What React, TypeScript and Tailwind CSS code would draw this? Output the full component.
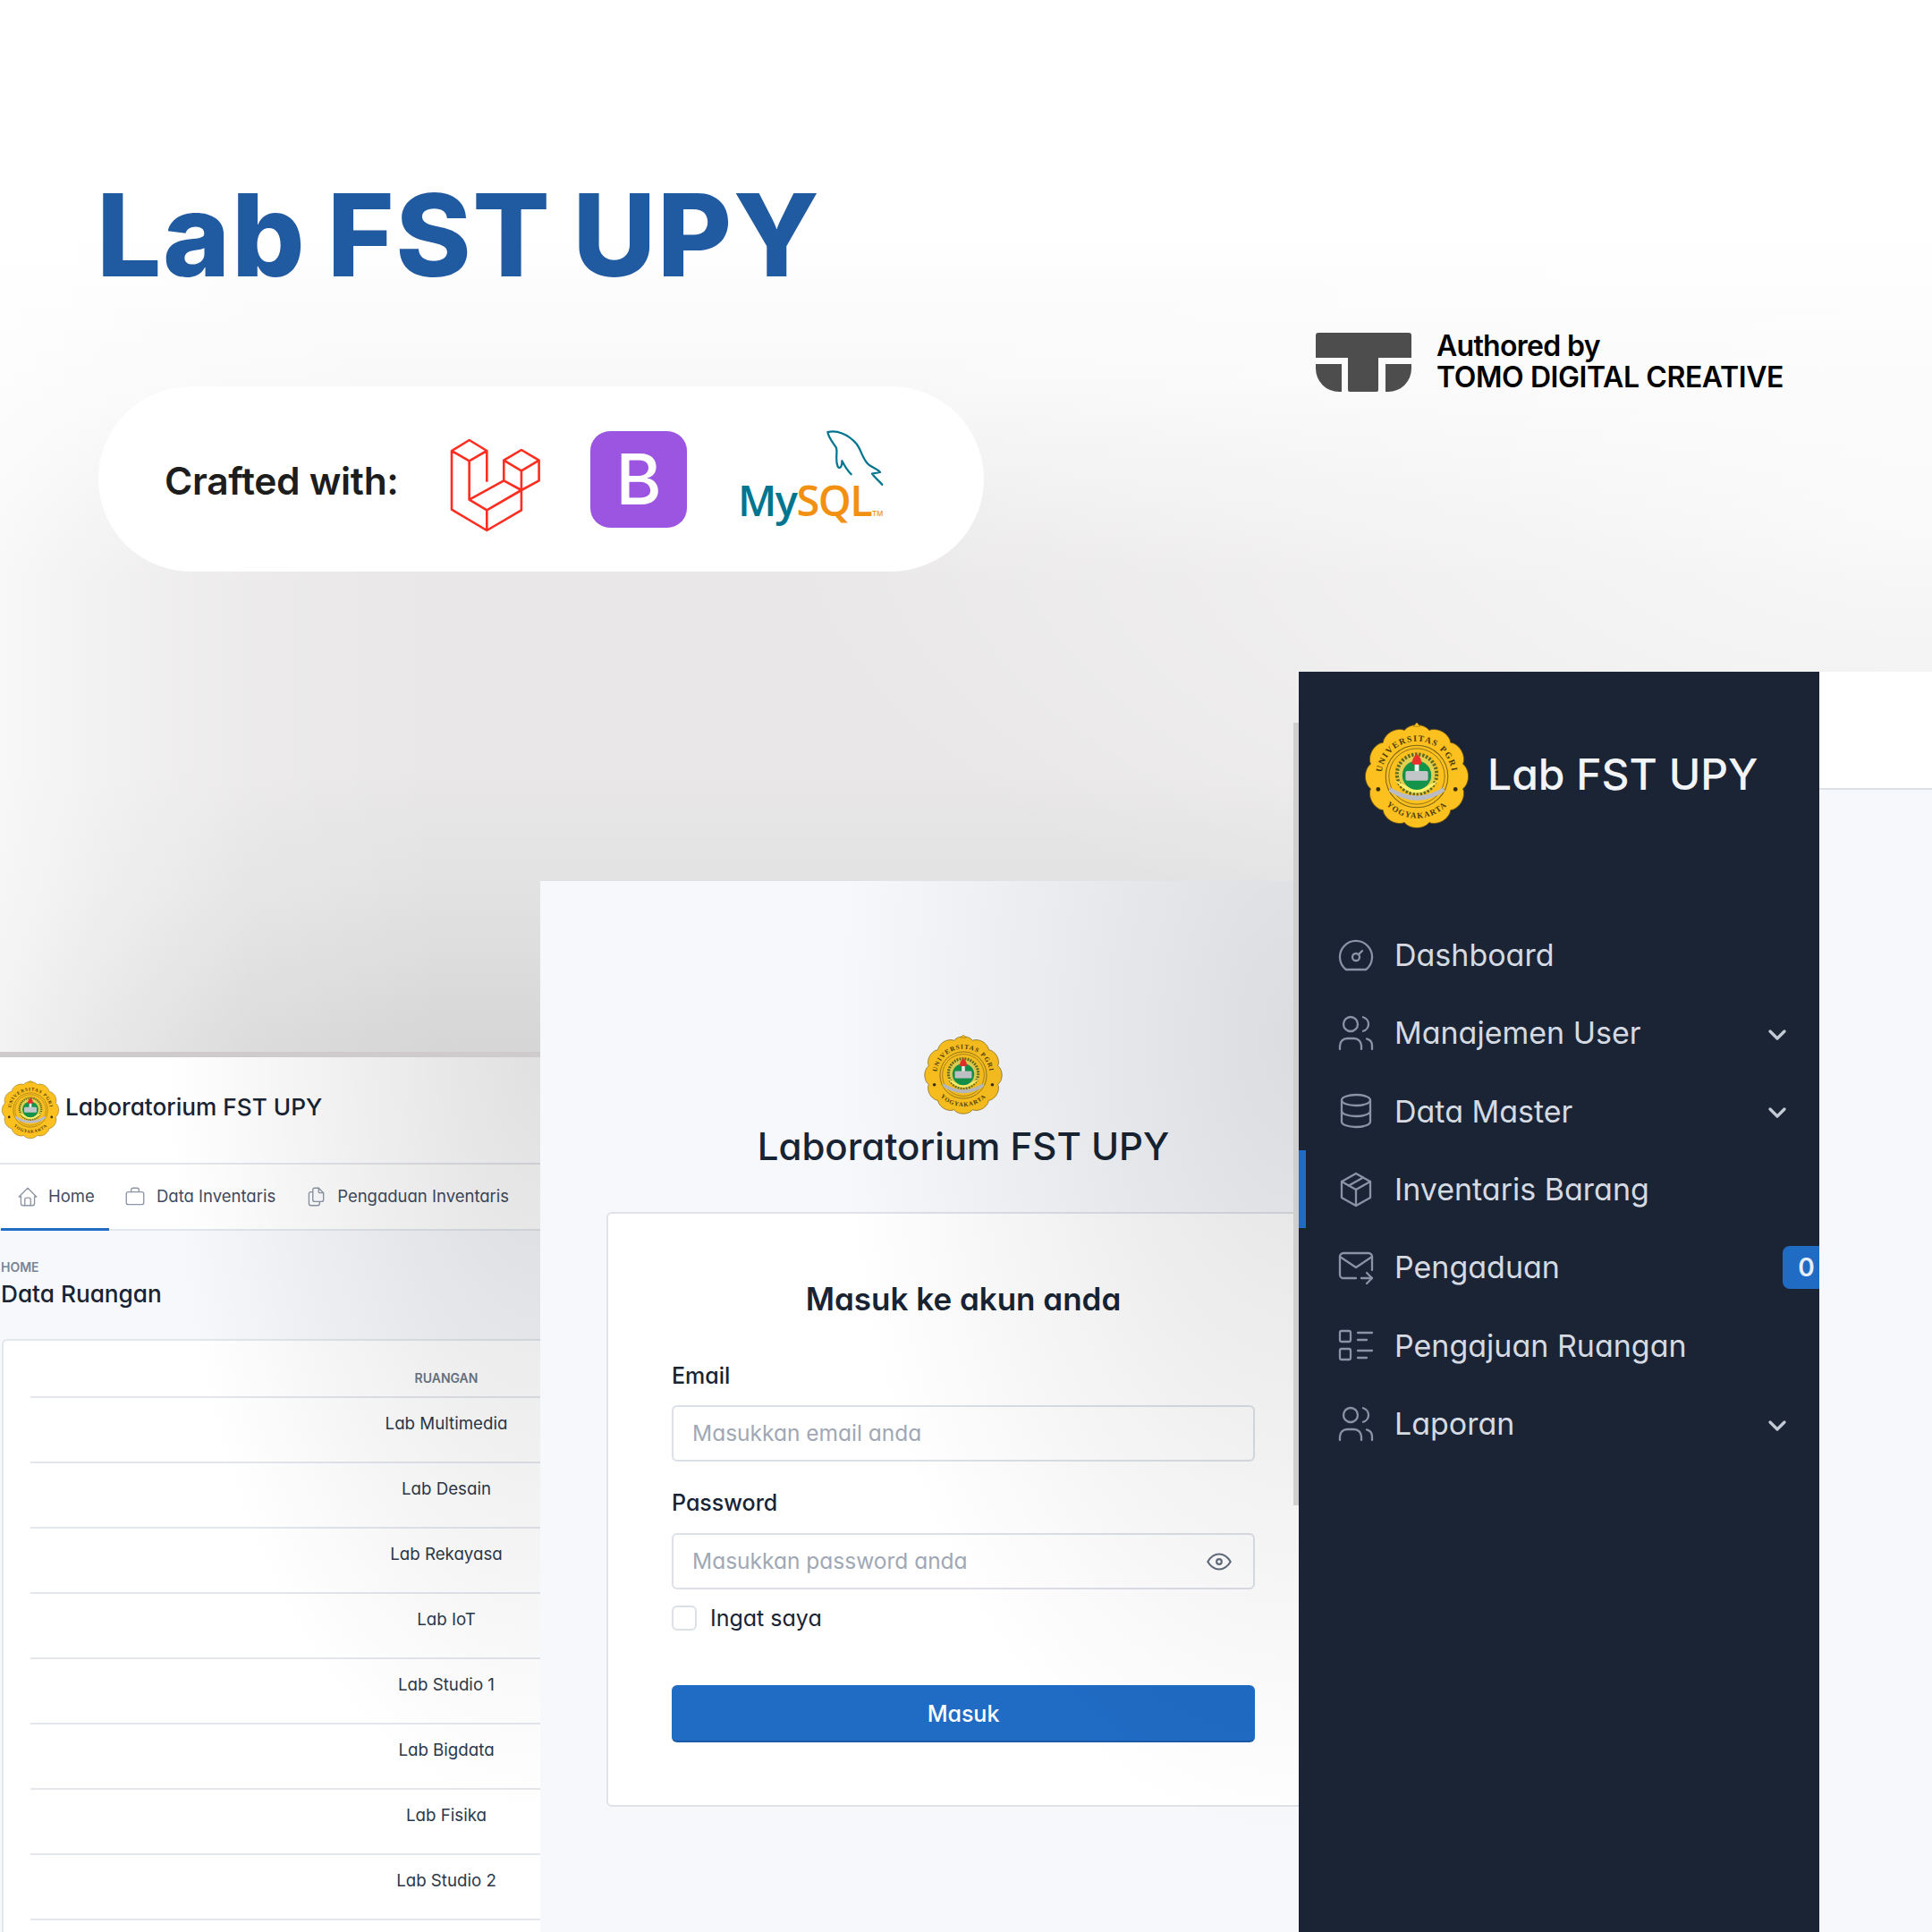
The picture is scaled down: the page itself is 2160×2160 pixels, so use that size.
import { TbBriefcase2, TbChevronDown, TbDatabase, TbEye, TbFiles, TbHome, TbListDetails, TbMailForward, TbPackage, TbUsers } from "react-icons/tb";

const rooms = ["Lab Multimedia", "Lab Desain", "Lab Rekayasa", "Lab IoT", "Lab Studio 1", "Lab Bigdata", "Lab Fisika", "Lab Studio 2", ""];

// tabler's old "dashboard" glyph: flat bottomed dial, which TbGauge no longer is
function DashIcon({ size, strokeWidth, className }: { size: number; strokeWidth: number; className: string }) {
  return (
    <svg viewBox="0 0 24 24" width={size} height={size} fill="none" stroke="currentColor" strokeWidth={strokeWidth} strokeLinecap="round" strokeLinejoin="round" className={className}>
      <path d="M12 13m-2 0a2 2 0 1 0 4 0a2 2 0 1 0 -4 0" />
      <path d="M13.45 11.55l2.05 -2.05" />
      <path d="M6.4 20a9 9 0 1 1 11.2 0z" />
    </svg>
  );
}

const menu = [
  { label: "Dashboard", icon: DashIcon },
  { label: "Manajemen User", icon: TbUsers, arrow: true },
  { label: "Data Master", icon: TbDatabase, arrow: true },
  { label: "Inventaris Barang", icon: TbPackage, active: true },
  { label: "Pengaduan", icon: TbMailForward, badge: "0" },
  { label: "Pengajuan Ruangan", icon: TbListDetails },
  { label: "Laporan", icon: TbUsers, arrow: true },
];

function scallop() {
  const pts: string[] = [];
  for (let i = 0; i < 360; i += 3) {
    const a = (i * Math.PI) / 180;
    const lobe = Math.abs(Math.cos(a * 6));
    const r = 44.5 + 3.5 * Math.pow(lobe, 0.7);
    pts.push(`${(50 + r * Math.sin(a)).toFixed(2)},${(50 - r * Math.cos(a)).toFixed(2)}`);
  }
  return pts.join(" ");
}

function Emblem({ id, className }: { id: string; className: string }) {
  return (
    <svg viewBox="0 0 100 100" className={className}>
      <polygon points={scallop()} fill="#fcc11f" stroke="#6b5412" strokeWidth="0.7" />
      <path d="M50 -0.5 L53 3.5 L47 3.5 Z" fill="#fcc11f" stroke="#6b5412" strokeWidth="0.4" />
      <path id={`${id}-top`} d="M17.5 56 A33 33 0 1 1 82.5 56" fill="none" />
      <path id={`${id}-bot`} d="M20.1 75 A39 39 0 0 0 79.9 75" fill="none" />
      <text fontFamily="'Liberation Serif', serif" fontSize="8" fontWeight="700" fill="#4a3a0c" letterSpacing="1.2">
        <textPath href={`#${id}-top`} startOffset="50%" textAnchor="middle">UNIVERSITAS PGRI</textPath>
      </text>
      <text fontFamily="'Liberation Serif', serif" fontSize="7.5" fontWeight="700" fill="#4a3a0c" letterSpacing="1">
        <textPath href={`#${id}-bot`} startOffset="50%" textAnchor="middle">YOGYAKARTA</textPath>
      </text>
      <circle cx="14" cy="62" r="2" fill="#3a2e0a" />
      <circle cx="86" cy="62" r="2" fill="#3a2e0a" />
      <circle cx="50" cy="50" r="29" fill="#fcc11f" stroke="#7d6416" strokeWidth="0.9" />
      <circle cx="50" cy="50" r="26" fill="none" stroke="#7d6416" strokeWidth="0.7" />
      <circle cx="50" cy="48" r="18.5" fill="#e3cf4f" stroke="#5f6a22" strokeWidth="3.4" strokeDasharray="2 1.4" />
      <path d="M29 53 Q50 78 71 53 Q50 68 29 53 Z" fill="#fdf06a" />
      <circle cx="50" cy="49" r="13.5" fill="#14934a" />
      <rect x="48" y="37" width="4" height="9" fill="#eef0ee" />
      <path d="M50 29 C53.5 32 55 36 54 39 L46 39 C45 36 46.5 32 50 29 Z" fill="#e8302c" />
      <rect x="39.5" y="45" width="21" height="9" rx="1.5" fill="#c3c6c8" />
      <path d="M25 60 Q50 76 75 60 L76 64 Q50 81 24 64 Z" fill="#b9bcc4" />
    </svg>
  );
}

function LaravelLogo() {
  return (
    <svg viewBox="634 997 141 303" preserveAspectRatio="none" className="w-[99px] h-[101px] shrink-0 overflow-visible" fill="none">
      <path
        vectorEffect="non-scaling-stroke"
        stroke="#ff2d20"
        strokeWidth="2.6"
        strokeLinejoin="round"
        d="M662 997 L690 1033 L662 1067 L634 1033 Z M634 1033 L634 1230 L690 1300 L745 1232 L745 1165 M662 1067 L662 1197 M690 1033 L690 1137 M745 1030 L773 1065 L745 1100 L717 1065 Z M773 1065 L773 1133 L745 1165 M745 1100 L745 1165 M717 1065 L717 1133 M717 1133 L745 1165 L690 1232 L662 1197 Z M690 1232 L690 1300"
      />
    </svg>
  );
}

function MysqlLogo() {
  return (
    <div className="relative w-[165px] h-[106px] shrink-0">
      <svg viewBox="360 60 205 200" className="absolute left-[95px] top-0 w-[66px] h-[64px] overflow-visible" fill="none">
        <path
          stroke="#00758f"
          strokeWidth="7"
          strokeLinecap="round"
          strokeLinejoin="round"
          d="M370 70 C400 62 440 75 470 110 C490 135 490 165 515 185 C530 195 545 200 553 210 L525 215 C535 230 550 240 560 253 M370 70 C372 90 395 115 400 125 C405 140 395 165 405 190 C410 198 420 195 420 170 C430 190 440 205 452 217"
        />
      </svg>
      <div className="absolute -left-[2px] -bottom-[18px] flex items-baseline font-['Open_Sans',sans-serif] font-semibold text-[47px] leading-[60px] tracking-[-1.5px]">
        <span className="text-[#00758f]">My</span>
        <span className="text-[#f29111]">SQL</span>
        <span className="text-[#f29111] text-[8px] tracking-normal ml-[1px]">TM</span>
      </div>
    </div>
  );
}

function TomoLogo() {
  return (
    <svg viewBox="0 0 107 66" className="w-[107px] h-[66px] shrink-0">
      <path
        fill="#4d4d4d"
        d="M3 0 H104 A3 3 0 0 1 107 3 V28 H0 V3 A3 3 0 0 1 3 0 Z M36 28 H70 V64 A2 2 0 0 1 68 66 H38 A2 2 0 0 1 36 64 Z M0 35 H29 V66 H26 A26 26 0 0 1 0 40 Z M78 35 H107 V40 A26 26 0 0 1 81 66 H78 Z"
      />
    </svg>
  );
}

function Hero() {
  return (
    <div className="h-[751px] shrink-0 flex items-start justify-between [font-feature-settings:normal]">
      <div className="pl-[108px] pt-[193px]">
        <h1 className="font-extrabold text-[128px] leading-[140px] text-[#205aa0] tracking-[1.6px] [word-spacing:-6px]">Lab FST UPY</h1>
        <div className="ml-[2px] mt-[99px] w-[990px] h-[207px] rounded-full bg-white flex items-center pl-[74px]">
          <span className="mt-[4px] font-semibold text-[42.5px] text-[#1d1d1d] tracking-[-0.3px] w-[270px]">Crafted with:</span>
          <div className="mt-[14px] ml-[51px] mr-[56px]"><LaravelLogo /></div>
          <div className="w-[108px] h-[108px] rounded-[22px] bg-[#9b55e0] flex items-center justify-center font-medium text-[78px] text-white">B</div>
          <div className="ml-[59px] -mt-[6px]"><MysqlLogo /></div>
        </div>
      </div>
      <div className="mt-[372px] mr-[166px] flex items-start gap-[28px]">
        <TomoLogo />
        <div className="-mt-[3px] font-semibold text-[32px] leading-[35px] tracking-[-0.7px] text-black">
          <div>Authored by</div>
          <div className="tracking-[-0.4px]">TOMO DIGITAL CREATIVE</div>
        </div>
      </div>
    </div>
  );
}

function RoomsPanel() {
  return (
    <div className="relative w-[604px] h-[984px] shrink-0 overflow-hidden border-t-[6px] border-[#cfcbcc] bg-[#f6f8fc]">
      <div className="bg-white border-b-2 border-[#e3e6eb] h-[120px] flex items-center pl-[1px] gap-[6px]">
        <Emblem id="a" className="w-[66px] h-[66px] shrink-0" />
        <span className="text-[26.2px] leading-[34px] font-medium text-[#182433] -mt-[6px]">Laboratorium FST UPY</span>
      </div>
      <div className="bg-white border-b-2 border-[#e3e6eb] h-[74px] flex items-stretch text-[18.5px] text-[#3f4b5e]">
        <div className="ml-px w-[121px] -mb-[2px] border-b-[3px] border-[#206bc4] flex items-center pl-[17px] gap-[10px]">
          <TbHome size={26} strokeWidth={1.25} className="text-[#8d96a5]" />
          <span>Home</span>
        </div>
        <div className="ml-[16px] flex items-center gap-[11px]">
          <TbBriefcase2 size={26} strokeWidth={1.25} className="text-[#8d96a5]" />
          <span>Data Inventaris</span>
        </div>
        <div className="ml-[32px] flex items-center gap-[11px]">
          <TbFiles size={26} strokeWidth={1.25} className="text-[#8d96a5]" />
          <span>Pengaduan Inventaris</span>
        </div>
      </div>
      <div className="pt-[31px] pl-px">
        <div className="text-[14px] leading-[20px] font-semibold text-[#7a8494]">HOME</div>
        <div className="mt-[2px] text-[26.2px] leading-[36px] font-medium text-[#182433]">Data Ruangan</div>
      </div>
      <div className="mt-[32px] ml-[2px] bg-white border-l-2 border-t-2 border-[#e3e6eb] rounded-tl-[6px] pl-[30px]">
        <div className="h-[64px] border-b-2 border-[#e3e6eb] flex justify-end">
          <div className="w-[210px] pt-[32px] text-center text-[14px] leading-[20px] font-semibold text-[#6b7585]">RUANGAN</div>
        </div>
        {rooms.map((room, i) => (
          <div key={i} className="h-[73px] border-b-2 border-[#e3e6eb] flex justify-end">
            <div className="w-[210px] pt-[15px] text-center text-[18.7px] leading-[28px] text-[#2c3849]">{room}</div>
          </div>
        ))}
      </div>
      <div className="absolute inset-0 pointer-events-none bg-[radial-gradient(ellipse_420px_850px_at_100%_0%,rgba(0,0,0,0.12),transparent)]" />
    </div>
  );
}

function LoginPanel() {
  return (
    <div className="relative w-[848px] h-[1175px] shrink-0 overflow-hidden bg-[#f6f8fc]">
      <div className="ml-[74px] w-[798px] flex flex-col items-center pt-[172px]">
        <Emblem id="b" className="w-[90px] h-[90px]" />
        <div className="mt-[7px] text-[42px] leading-[56px] font-medium text-[#182433]">Laboratorium FST UPY</div>
        <div className="mt-[45px] w-full h-[665px] bg-white border-2 border-[#dfe3e9] rounded-[6px] flex flex-col items-center pt-[71px]">
          <h2 className="text-[35px] leading-[48px] font-semibold text-[#182433]">Masuk ke akun anda</h2>
          <div className="w-[652px] mt-[44px]">
            <label className="block text-[25px] leading-[36px] font-medium text-[#182433]">Email</label>
            <input readOnly placeholder="Masukkan email anda" className="mt-[15px] w-full h-[63px] border-2 border-[#dce1e7] rounded-[6px] pl-[21px] pr-[21px] pb-[2px] text-[24.5px] bg-white placeholder:text-[#a0a8b5]" />
            <label className="block mt-[28px] text-[25px] leading-[36px] font-medium text-[#182433]">Password</label>
            <div className="relative mt-[16px]">
              <input readOnly placeholder="Masukkan password anda" className="w-full h-[63px] border-2 border-[#dce1e7] rounded-[6px] pl-[21px] pr-[21px] pb-[2px] text-[24.5px] bg-white placeholder:text-[#a0a8b5]" />
              <TbEye size={34} strokeWidth={1.5} className="absolute right-[23px] top-[15px] text-[#626d7e]" />
            </div>
            <div className="mt-[18px] flex items-center gap-[15px]">
              <span className="w-[28px] h-[28px] border-2 border-[#dce1e7] rounded-[6px] bg-white" />
              <span className="text-[25px] leading-[28px] text-[#182433]">Ingat saya</span>
            </div>
            <button className="mt-[61px] w-full h-[64px] pt-[3px] bg-[#206bc4] border-b-2 border-[#1a5aa6] rounded-[6px] text-[25px] font-medium text-white">Masuk</button>
          </div>
        </div>
      </div>
      <div className="absolute inset-0 pointer-events-none bg-[radial-gradient(ellipse_520px_900px_at_100%_15%,rgba(0,0,0,0.115),transparent)]" />
    </div>
  );
}

function Sidebar() {
  return (
    <div className="relative w-[582px] h-[1409px] shrink-0 bg-[#1a2435]">
      <div className="absolute -left-[6px] top-[57px] w-[6px] h-[875px] bg-[#d0cfcf]" />
      <div className="pl-[72px] pt-[57px] flex items-center gap-[19px]">
        <Emblem id="c" className="w-[120px] h-[120px] shrink-0" />
        <span className="text-[48px] leading-[60px] font-medium text-[#f2f4f7] -mt-[5px]">Lab FST UPY</span>
      </div>
      <div className="mt-[96px]">
        {menu.map((item) => {
          const Icon = item.icon;
          return (
            <div key={item.label} className="relative h-[87.33px] flex items-center pl-[40px]">
              {item.active && <div className="absolute left-0 top-0 w-[8px] h-full bg-[#206bc4]" />}
              <Icon size={48} strokeWidth={1.15} className="text-[#8a94a6] shrink-0" />
              <span className="ml-[19px] text-[34px] text-[#d5dae2]">{item.label}</span>
              {item.arrow && <TbChevronDown size={32} strokeWidth={2.5} className="ml-auto mr-[31px] mt-[4px] text-[#c4cad4]" />}
              {item.badge && (
                <div className="ml-auto w-[41px] h-[48px] rounded-l-[8px] bg-[#206bc4] flex items-center justify-center pl-[12px] font-semibold text-[28px] text-[#e8eef7]">{item.badge}</div>
              )}
            </div>
          );
        })}
      </div>
    </div>
  );
}

function RightPanel() {
  return (
    <div className="w-[126px] h-[1409px] shrink-0 bg-[#f6f8fc]">
      <div className="h-[132px] bg-white border-b-2 border-[#dce1e7]" />
    </div>
  );
}

export default function App() {
  return (
    <div className="w-[2160px] h-[2160px] overflow-hidden flex flex-col font-['Inter',sans-serif] [font-feature-settings:'cv11'] bg-[linear-gradient(to_right,rgba(255,255,255,0.7),rgba(255,255,255,0.45)_110px,rgba(255,255,255,0.15)_280px,rgba(255,255,255,0)_500px),radial-gradient(ellipse_1300px_550px_at_100%_27%,rgba(255,255,255,0.75),rgba(255,255,255,0)),linear-gradient(to_bottom,#ffffff_12%,#f8f8f8_20%,#e9e7e7_30%,#e9e7e7_40%,#e2e2e2_46%,#d6d6d6_54%)]">
      <Hero />
      <div className="h-[1409px] flex items-end">
        <RoomsPanel />
        <LoginPanel />
        <Sidebar />
        <RightPanel />
      </div>
    </div>
  );
}
